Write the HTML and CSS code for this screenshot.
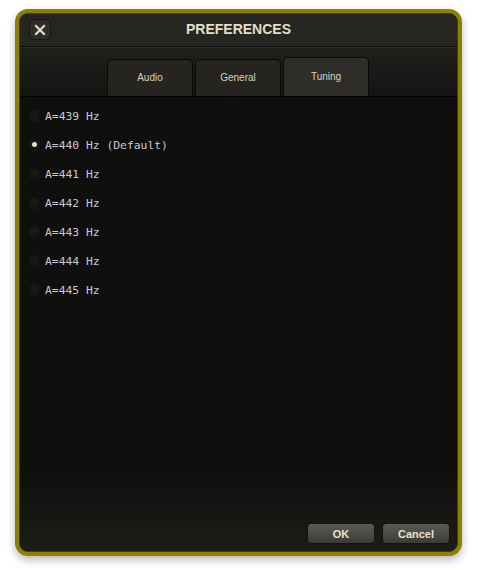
FILE: index.html
```html
<!DOCTYPE html>
<html>
<head>
<meta charset="utf-8">
<link rel="stylesheet" href="styles.css">
</head>
<body>
<div class="frame">
  <div class="panel">
    <div class="titlebar">
      <button class="close" aria-label="Close">
        <svg width="12" height="12" viewBox="0 0 12 12"><path d="M2 2 L10 10 M10 2 L2 10" stroke="#e2ddc6" stroke-width="2.2" stroke-linecap="square"/></svg>
      </button>
      <div class="title">PREFERENCES</div>
    </div>
    <div class="tabbar">
      <div class="tab">Audio</div>
      <div class="tab">General</div>
      <div class="tab active">Tuning</div>
    </div>
    <div class="content">
      <ul class="list">
        <li class="row"><span class="radio"></span>A=439 Hz</li>
        <li class="row"><span class="radio on"></span>A=440 Hz (Default)</li>
        <li class="row"><span class="radio"></span>A=441 Hz</li>
        <li class="row"><span class="radio"></span>A=442 Hz</li>
        <li class="row"><span class="radio"></span>A=443 Hz</li>
        <li class="row"><span class="radio"></span>A=444 Hz</li>
        <li class="row"><span class="radio"></span>A=445 Hz</li>
      </ul>
      <div class="actions">
        <button class="btn">OK</button>
        <button class="btn">Cancel</button>
      </div>
    </div>
  </div>
</div>
</body>
</html>
```

FILE: styles.css
```css
* { box-sizing: border-box; }
html, body { margin: 0; padding: 0; background: #ffffff; }
body { width: 478px; height: 578px; overflow: hidden; }

.frame {
  margin: 9px 0 0 15px;
  width: 447px;
  height: 547px;
  border: 4px solid #8d7f02;
  border-radius: 13px;
  background: #8d7f02;
  box-shadow: 0 4px 9px rgba(0,0,0,0.28);
}
.panel {
  width: 100%;
  height: 100%;
  border-radius: 9px;
  overflow: hidden;
  display: flex;
  flex-direction: column;
  background: #0f0f0e;
  border: 1px solid #3a3a36;
}
.titlebar {
  height: 33px;
  flex: none;
  background: #252522;
  border-bottom: 1px solid #0b0b0a;
  display: flex;
  align-items: center;
  position: relative;
}
.close {
  margin-left: 9px;
  margin-top: -1px;
  width: 22px;
  height: 21px;
  border-radius: 4px;
  border: 1px solid #161614;
  background: #2e2d29;
  padding: 0;
  display: flex;
  align-items: center;
  justify-content: center;
}
.title {
  position: absolute;
  left: 0; right: 0; top: 0; bottom: 2px;
  display: flex;
  align-items: center;
  justify-content: center;
  font-family: "Liberation Sans", Arial, sans-serif;
  font-weight: bold;
  font-size: 14px;
  color: #e3dfc3;
  pointer-events: none;
}
.tabbar {
  height: 50px;
  flex: none;
  background: linear-gradient(#1f1f1c, #141412);
  border-top: 1px solid #2c2c28;
  border-bottom: 1px solid #000;
  display: flex;
  align-items: flex-end;
  gap: 2px;
  padding-left: 87px;
}
.tab {
  width: 86px;
  height: 37px;
  padding-bottom: 2px;
  background: #252420;
  border: 1px solid #0a0a09;
  border-bottom: none;
  border-radius: 5px 5px 0 0;
  display: flex;
  align-items: center;
  justify-content: center;
  font-family: "Liberation Sans", Arial, sans-serif;
  font-size: 10px;
  color: #d6d2bc;
}
.tab.active {
  height: 39px;
  padding-bottom: 2px;
  background: #2e2d29;
}
.content {
  flex: 1;
  display: flex;
  flex-direction: column;
  background: linear-gradient(#0f0f0e 0%, #0f0f0e 82%, #1c1c18 100%);
}
.list {
  list-style: none;
  margin: 0;
  padding: 4px 0 0 9px;
  flex: 1;
}
.row {
  height: 29px;
  display: flex;
  align-items: center;
  gap: 5px;
  font-family: "DejaVu Sans Mono", "Liberation Mono", monospace;
  font-size: 11.35px;
  color: #c6cbd3;
}
.radio {
  width: 11px;
  height: 11px;
  border-radius: 50%;
  background: radial-gradient(circle at 50% 40%, #1a1a19, #121211);
  box-shadow: 0 1px 0 #1c1c1a;
  display: flex;
  align-items: center;
  justify-content: center;
}
.radio.on::after {
  content: "";
  width: 5px;
  height: 5px;
  border-radius: 50%;
  background: #e4e1c8;
}
.actions {
  display: flex;
  justify-content: flex-end;
  gap: 7px;
  padding: 0 7px 7px 0;
}
.btn {
  width: 68px;
  height: 21px;
  border-radius: 4px;
  border: 1px solid #141412;
  background: linear-gradient(#5b5b56, #3a3a37);
  font-family: "Liberation Sans", Arial, sans-serif;
  font-weight: bold;
  font-size: 11px;
  color: #e6e2cb;
  padding: 0;
}
```
